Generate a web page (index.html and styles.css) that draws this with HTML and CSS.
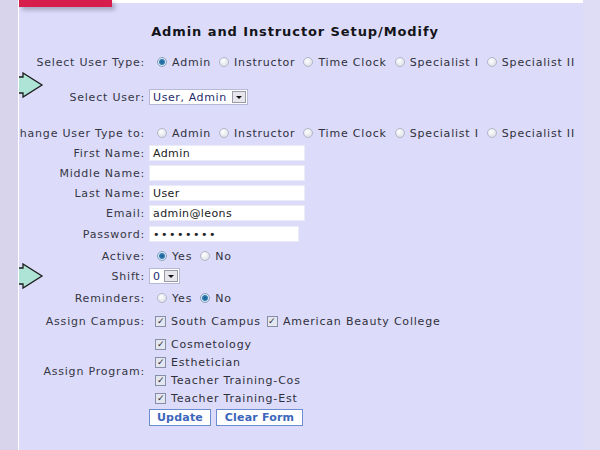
FILE: index.html
```html
<!DOCTYPE html>
<html lang="en">
<head>
  <meta charset="UTF-8">
  <title>Admin and Instructor Setup/Modify</title>
  <link rel="stylesheet" href="styles.css">
</head>
<body>
  <div class="page">
    <div class="side"></div>

    <!-- pointer arrows drawn over the form -->
    <svg class="arrow arrow-1" width="26" height="28" viewBox="0 0 26 28">
      <path d="M0 5 H5 V1 L24 13 L5 25 V21 H0 Z"/>
    </svg>
    <svg class="arrow arrow-2" width="26" height="28" viewBox="0 0 26 28">
      <path d="M0 5 H5 V1 L24 13 L5 25 V21 H0 Z"/>
    </svg>

    <div class="main">
      <div class="topbar"><div class="tab"></div></div>

      <h1 class="title">Admin and Instructor Setup/Modify</h1>

      <form class="setup">
        <div class="row r-type">
          <div class="lbl">Select User Type:</div>
          <div class="val">
            <label class="opt"><input class="rb" type="radio" name="utype" checked>Admin</label>
            <label class="opt"><input class="rb" type="radio" name="utype">Instructor</label>
            <label class="opt"><input class="rb" type="radio" name="utype">Time Clock</label>
            <label class="opt"><input class="rb" type="radio" name="utype">Specialist I</label>
            <label class="opt"><input class="rb" type="radio" name="utype">Specialist II</label>
          </div>
        </div>

        <div class="row r-user">
          <div class="lbl">Select User:</div>
          <div class="val">
            <div class="pick pick-user"><span class="pick-text">User, Admin</span><span class="drop"></span></div>
          </div>
        </div>

        <div class="row r-change">
          <div class="lbl">Change User Type to:</div>
          <div class="val">
            <label class="opt"><input class="rb" type="radio" name="ctype">Admin</label>
            <label class="opt"><input class="rb" type="radio" name="ctype">Instructor</label>
            <label class="opt"><input class="rb" type="radio" name="ctype">Time Clock</label>
            <label class="opt"><input class="rb" type="radio" name="ctype">Specialist I</label>
            <label class="opt"><input class="rb" type="radio" name="ctype">Specialist II</label>
          </div>
        </div>

        <div class="row">
          <div class="lbl">First Name:</div>
          <div class="val"><input class="txt" type="text" value="Admin"></div>
        </div>
        <div class="row">
          <div class="lbl">Middle Name:</div>
          <div class="val"><input class="txt" type="text" value=""></div>
        </div>
        <div class="row">
          <div class="lbl">Last Name:</div>
          <div class="val"><input class="txt" type="text" value="User"></div>
        </div>
        <div class="row">
          <div class="lbl">Email:</div>
          <div class="val"><input class="txt" type="text" value="admin@leons"></div>
        </div>
        <div class="row r-pass">
          <div class="lbl">Password:</div>
          <div class="val"><input class="txt txt-pass" type="password" value="password"></div>
        </div>

        <div class="row r-active">
          <div class="lbl">Active:</div>
          <div class="val">
            <label class="opt"><input class="rb" type="radio" name="active" checked>Yes</label>
            <label class="opt"><input class="rb" type="radio" name="active">No</label>
          </div>
        </div>

        <div class="row">
          <div class="lbl">Shift:</div>
          <div class="val">
            <div class="pick pick-shift"><span class="pick-text">0</span><span class="drop"></span></div>
          </div>
        </div>

        <div class="row r-rem">
          <div class="lbl">Reminders:</div>
          <div class="val">
            <label class="opt"><input class="rb" type="radio" name="remind">Yes</label>
            <label class="opt"><input class="rb" type="radio" name="remind" checked>No</label>
          </div>
        </div>

        <div class="row r-campus">
          <div class="lbl">Assign Campus:</div>
          <div class="val">
            <label class="opt"><input class="cb" type="checkbox" checked>South Campus</label>
            <label class="opt"><input class="cb" type="checkbox" checked>American Beauty College</label>
          </div>
        </div>

        <div class="row r-prog">
          <div class="lbl">Assign Program:</div>
          <div class="val list">
            <label class="opt"><input class="cb" type="checkbox" checked>Cosmetology</label>
            <label class="opt"><input class="cb" type="checkbox" checked>Esthetician</label>
            <label class="opt"><input class="cb" type="checkbox" checked>Teacher Training-Cos</label>
            <label class="opt"><input class="cb" type="checkbox" checked>Teacher Training-Est</label>
          </div>
        </div>

        <div class="row r-btns">
          <div class="lbl"></div>
          <div class="val btns">
            <button class="btn btn-update" type="button">Update</button>
            <button class="btn btn-clear" type="reset">Clear Form</button>
          </div>
        </div>
      </form>
    </div>

    <div class="edge"></div>
  </div>
</body>
</html>
```

FILE: styles.css
```css
body {
  margin: 0;
  font-family: "DejaVu Sans", Verdana, sans-serif;
  font-size: 11px;
  letter-spacing: 0.8px;
  color: #363644;
}

.page {
  display: flex;
  height: 450px;
  position: relative;
  background: #dcdcfa;
}

.side {
  width: 18px;
  flex-shrink: 0;
  background: #d8d4ec;
  border-right: 1px solid #fff;
  position: relative;
  z-index: 2;
}

.main {
  width: 564px;
  flex-shrink: 0;
  overflow: hidden;
}

.edge { flex: 1; background: #dfdcf6; }

/* header strip */
.topbar {
  height: 3px;
  background: #fff;
  position: relative;
}
.tab {
  position: absolute;
  left: 0;
  top: 0;
  width: 93px;
  height: 7px;
  background: #d61d4c;
  box-shadow: 3px 3px 4px rgba(60, 60, 80, 0.35);
}

/* arrows */
.arrow {
  position: absolute;
  left: 18px;
  z-index: 1;
}
.arrow path {
  fill: #aee4d6;
  stroke: #1c1c1c;
  stroke-width: 1.3;
  stroke-linejoin: miter;
}
.arrow-1 { top: 72px; }
.arrow-2 { top: 263px; }

.title {
  margin: 19px 0 0;
  height: 20px;
  line-height: 20px;
  font-size: 13px;
  font-weight: bold;
  letter-spacing: 0.9px;
  color: #141418;
  text-align: center;
  padding-right: 12px;
}

/* form rows */
.row {
  display: flex;
  align-items: center;
  height: 20px;
}
.lbl {
  width: 126px;
  flex-shrink: 0;
  display: flex;
  justify-content: flex-end;
  white-space: nowrap;
  margin-right: 4px;
}
.val {
  display: flex;
  align-items: center;
  white-space: nowrap;
}

.r-type { margin-top: 10px; }
.r-user { margin-top: 15px; }
.r-change { margin-top: 16px; }
.r-pass { margin-top: 1px; }
.r-active { margin-top: 2px; }
.r-rem { margin-top: 2px; }
.r-campus { margin-top: 3px; }
.r-prog { margin-top: 4px; height: auto; }
.r-btns { margin-top: 1px; height: 18px; }

.list {
  flex-direction: column;
  align-items: flex-start;
}
.list .opt { height: 18px; }

.opt {
  display: inline-flex;
  align-items: center;
  color: #30303a;
}

/* radios */
.rb {
  appearance: none;
  width: 10px;
  height: 10px;
  margin: 0 5px 0 8px;
  border-radius: 50%;
  border: 1px solid #b2b6c8;
  background: radial-gradient(circle at 40% 35%, #ffffff, #d6d8e2);
}
.rb:checked {
  border-color: #8aa0bc;
  background: radial-gradient(circle, #1c5a8a 0, #2f7fb4 2.5px, #dce8f4 3.5px, #cfd6e2 100%);
}

/* checkboxes */
.cb {
  appearance: none;
  width: 11px;
  height: 11px;
  margin: 0 5px 0 6px;
  border: 1px solid #868ea8;
  background: #e4e6f0;
  position: relative;
}
.cb:checked::after {
  content: "\2713";
  position: absolute;
  left: 0;
  top: 0;
  width: 9px;
  line-height: 9px;
  font-size: 9px;
  letter-spacing: 0;
  text-align: center;
  color: #2a2a3a;
}

/* text fields */
.txt {
  box-sizing: border-box;
  width: 156px;
  height: 16px;
  margin: 0;
  padding: 0 3px;
  border: 1px solid #ececf8;
  background: #fff;
  font: inherit;
  letter-spacing: 0.4px;
  color: #222;
  outline: none;
}
.txt-pass { width: 150px; letter-spacing: 1.5px; }

/* fake select boxes */
.pick {
  box-sizing: border-box;
  display: inline-flex;
  align-items: center;
  justify-content: space-between;
  height: 16px;
  padding: 0 1px 0 3px;
  background: #fff;
  border: 1px solid #b6bad6;
  letter-spacing: 0.6px;
  color: #1e2c6c;
}
.pick-user { width: 99px; }
.pick-shift { width: 31px; }
.drop {
  box-sizing: border-box;
  width: 14px;
  height: 12px;
  background: #e6e6ec;
  border: 1px solid #9a9aa8;
  display: flex;
  align-items: center;
  justify-content: center;
}
.drop::after {
  content: "";
  border-left: 3px solid transparent;
  border-right: 3px solid transparent;
  border-top: 3px solid #111;
}

/* buttons */
.btns { gap: 5px; }
.btn {
  box-sizing: border-box;
  height: 17px;
  padding: 0;
  background: #fff;
  border: 1px solid #6c8cd2;
  font-family: "DejaVu Sans", Verdana, sans-serif;
  font-size: 11px;
  font-weight: bold;
  letter-spacing: 0.2px;
  color: #3c66bc;
  cursor: pointer;
}
.btn-update { width: 62px; }
.btn-clear { width: 87px; }
```
